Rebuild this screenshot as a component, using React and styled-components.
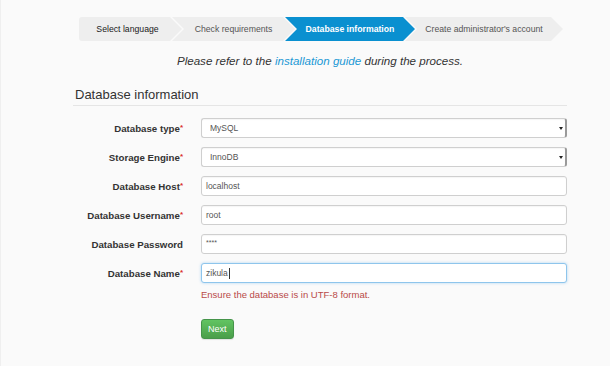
import React from 'react';
import styled, {createGlobalStyle} from 'styled-components';

const GlobalStyle = createGlobalStyle`
    html, body {
        margin: 0;
        padding: 0;
        background: #fafafa;
        font-family: "Liberation Sans", Arial, sans-serif;
    }
`

const steps = [
    {label: "Select language", state: "done"},
    {label: "Check requirements", state: "todo"},
    {label: "Database information", state: "active"},
    {label: "Create administrator's account", state: "todo"},
];

const fields = [
    {label: "Database type", required: true, value: "MySQL", select: true},
    {label: "Storage Engine", required: true, value: "InnoDB", select: true},
    {label: "Database Host", required: true, value: "localhost"},
    {label: "Database Username", required: true, value: "root"},
    {label: "Database Password", value: "****", small: true},
    {label: "Database Name", required: true, value: "zikula", focused: true},
];

const App = () => {
    return (
        <Page>
            <GlobalStyle/>
            <Wrapper>
                <Steps>
                    {steps.map((step, i) =>
                        <Step key={step.label} first={i === 0} state={step.state} width={[103, 123, 130, 158][i]}>
                            {step.label}
                        </Step>)}
                </Steps>

                <Intro>
                    Please refer to the <a href="#">installation guide</a> during the process.
                </Intro>

                <Legend>Database information</Legend>

                <Form>
                    {fields.map((f) =>
                        <React.Fragment key={f.label}>
                            <Label>{f.label}{f.required ? <Req>*</Req> : null}</Label>
                            <Control select={f.select} focused={f.focused}>
                                <FieldText small={f.small}>{f.value}</FieldText>
                                {f.focused ? <Caret/> : null}
                            </Control>
                        </React.Fragment>
                    )}
                    <span/>
                    <Help>Ensure the database is in UTF-8 format.</Help>
                    <span/>
                    <Actions>
                        <Button>Next</Button>
                    </Actions>
                </Form>
            </Wrapper>
        </Page>
    );
};

export default App;

const Page = styled.div`
    min-height: 366px;
    border-left: 1px solid #efefef;
    box-sizing: border-box;
`

const Wrapper = styled.div`
    width: 494px;
    margin-left: 72px;
    padding-top: 17px;
`

const Steps = styled.div`
    display: flex;
    padding-left: 6px;
`

const Step = styled.div`
    width: ${p => p.width}px;
    height: 24px;
    flex: none;
    box-sizing: border-box;
    margin-left: ${p => p.first ? 0 : -10}px;
    padding: 0 12px 0 ${p => p.first ? 6 : 12}px;
    display: flex;
    align-items: center;
    justify-content: center;
    font-size: 8.7px;
    font-weight: ${p => p.state === "active" ? "bold" : "normal"};
    color: ${p => p.state === "active" ? "#fff" : p.state === "done" ? "#1a1a1a" : "#555"};
    background: ${p => p.state === "active" ? "#0a90d0" : "#eeeeee"};
    border-radius: ${p => p.first ? "3px 0 0 3px" : 0};
    clip-path: ${p => p.first
        ? "polygon(0 0, calc(100% - 12px) 0, 100% 50%, calc(100% - 12px) 100%, 0 100%)"
        : "polygon(0 0, calc(100% - 12px) 0, 100% 50%, calc(100% - 12px) 100%, 0 100%, 12px 50%)"};
    white-space: nowrap;
`

const Intro = styled.p`
    margin: 13px 0 0;
    text-align: center;
    font-style: italic;
    font-size: 11.6px;
    color: #333;

    a {
        color: #1a98d5;
        text-decoration: none;
    }
`

const Legend = styled.div`
    margin-top: 20px;
    padding: 0 0 3px 2px;
    font-size: 13px;
    color: #333;
    border-bottom: 1px solid #e5e5e5;
`

const Form = styled.div`
    display: grid;
    grid-template-columns: 110px 1fr;
    column-gap: 18px;
    row-gap: 9px;
    margin-top: 12px;
    align-items: center;
`

const Label = styled.div`
    text-align: right;
    font-size: 9.7px;
    font-weight: bold;
    color: #333;
    white-space: nowrap;
`

const Req = styled.span`
    color: #d9302c;
    font-size: 8px;
    vertical-align: 2px;
`

const Control = styled.div`
    position: relative;
    height: 20px;
    box-sizing: border-box;
    background: #fff;
    border: 1px solid ${p => p.focused ? "#8ec5ec" : "#cfcfcf"};
    border-radius: 3px;
    box-shadow: ${p => p.focused ? "0 0 3px rgba(82,168,236,0.45)" : "inset 0 1px 1px rgba(0,0,0,0.04)"};
    display: flex;
    align-items: center;
    padding-left: ${p => p.select ? 8 : 4}px;
    font-size: 8.5px;
    color: #555;

    ${p => p.select ? `
        border-right: 2px solid #9a9a9a;
        &::after {
            content: "";
            position: absolute;
            right: 2px;
            top: 8px;
            border-left: 2px solid transparent;
            border-right: 2px solid transparent;
            border-top: 3px solid #222;
        }
    ` : ""}
`

const FieldText = styled.span`
    position: relative;
    top: ${p => p.small ? -2 : 0}px;
    font-size: ${p => p.small ? 7 : 8.5}px;
`

const Caret = styled.span`
    display: inline-block;
    width: 1px;
    height: 11px;
    background: #333;
    margin-left: 1px;
`

const Help = styled.div`
    margin-top: -3px;
    font-size: 9.5px;
    color: #b94a48;
`

const Actions = styled.div`
    margin-top: 10px;
`

const Button = styled.button`
    display: block;
    height: 20px;
    padding: 0 6px;
    font-family: "Liberation Sans", Arial, sans-serif;
    font-size: 9px;
    color: #fff;
    background: linear-gradient(#62c462, #4a9e4a);
    border: 1px solid #45944a;
    border-radius: 3px;
    box-shadow: 0 1px 1px rgba(0,0,0,0.1);
`
